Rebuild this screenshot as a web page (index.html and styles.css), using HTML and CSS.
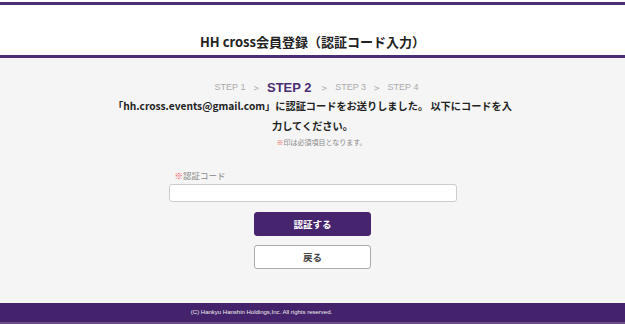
FILE: index.html
```html
<!DOCTYPE html>
<html lang="ja">
<head>
  <meta charset="UTF-8">
  <title>HH cross会員登録（認証コード入力）</title>
  <link rel="stylesheet" href="styles.css">
</head>
<body>
  <div class="page">
    <header class="site-top">
      <div class="header">
        <h1 class="page-title">HH cross会員登録（認証コード入力）</h1>
      </div>
    </header>

    <main class="main">
      <!-- steps -->
      <div class="steps">
        <span class="step">STEP 1</span>
        <span class="arrow">&gt;</span>
        <span class="step current">STEP 2</span>
        <span class="arrow">&gt;</span>
        <span class="step">STEP 3</span>
        <span class="arrow">&gt;</span>
        <span class="step">STEP 4</span>
      </div>

      <p class="message">「hh.cross.events@gmail.com」に認証コードをお送りしました。 以下にコードを入力してください。</p>
      <p class="note"><span class="req">※</span>印は必須項目となります。</p>

      <form class="form" onsubmit="return false;">
        <label class="field-label" for="code"><span class="req">※</span>認証コード</label>
        <input class="field-input" id="code" type="text">
        <button class="btn btn-primary" type="submit">認証する</button>
        <button class="btn btn-back" type="button">戻る</button>
      </form>
    </main>

    <footer class="footer">
      (C) Hankyu Hanshin Holdings,Inc. All rights reserved.
    </footer>
  </div>
</body>
</html>
```

FILE: styles.css
```css
* {
  box-sizing: border-box;
}

body {
  margin: 0;
  padding: 0;
  font-family: "Noto Sans CJK JP", "Noto Sans", sans-serif;
  background: #f5f5f5;
  color: #222;
}

.page {
  display: flex;
  flex-direction: column;
  min-height: 100vh;
}

.site-top {
  background: #fff;
  padding-top: 2px;
}

.header {
  border-top: 3px solid #4b2d73;
  border-bottom: 3px solid #4b2d73;
  padding: 29px 0 5px;
  text-align: center;
}

.page-title {
  margin: 0;
  font-size: 13px;
  line-height: 16px;
  font-weight: bold;
  color: #222;
}

.main {
  flex: 1;
  padding-top: 20px;
  display: flex;
  flex-direction: column;
  align-items: center;
}

.steps {
  display: flex;
  align-items: center;
  justify-content: center;
  height: 18px;
  color: #aaa;
  font-size: 9px;
  padding-left: 8px;
}

.steps .step {
  font-family: "Liberation Sans", sans-serif;
}

.steps .arrow {
  margin: 0 8px;
  font-size: 10px;
}

.steps .current {
  font-size: 13px;
  font-weight: bold;
  color: #4b2d73;
  margin-right: 2px;
}

.message {
  margin: 0;
  width: 400px;
  font-size: 10.2px;
  line-height: 20px;
  font-weight: bold;
  text-align: center;
}

.note {
  margin: 0;
  padding-left: 18px;
  font-size: 7px;
  line-height: 12px;
  color: #888;
}

.req {
  color: #ee5252;
}

.form {
  margin-top: 20px;
  width: 288px;
  display: flex;
  flex-direction: column;
  align-items: center;
}

.field-label {
  align-self: flex-start;
  padding-left: 6px;
  font-size: 8.5px;
  line-height: 14px;
  color: #888;
}

.field-input {
  margin-top: 2px;
  width: 100%;
  height: 18px;
  border: 1px solid #ccc;
  border-radius: 3px;
  background: #fff;
}

.btn {
  width: 117px;
  height: 24px;
  border-radius: 3px;
  font-family: "Noto Sans CJK JP", sans-serif;
  font-size: 9.5px;
  font-weight: bold;
  cursor: pointer;
}

.btn-primary {
  margin-top: 10px;
  background: #46246e;
  border: 1px solid #46246e;
  color: #fff;
}

.btn-back {
  margin-top: 9px;
  background: #fff;
  border: 1px solid #aaa;
  color: #444;
}

.footer {
  height: 21px;
  padding-right: 102px;
  background: #45236c;
  border-bottom: 2px solid #6b5088;
  color: #eee;
  font-family: "Liberation Sans", sans-serif;
  font-size: 6px;
  line-height: 19px;
  text-align: center;
}
```
